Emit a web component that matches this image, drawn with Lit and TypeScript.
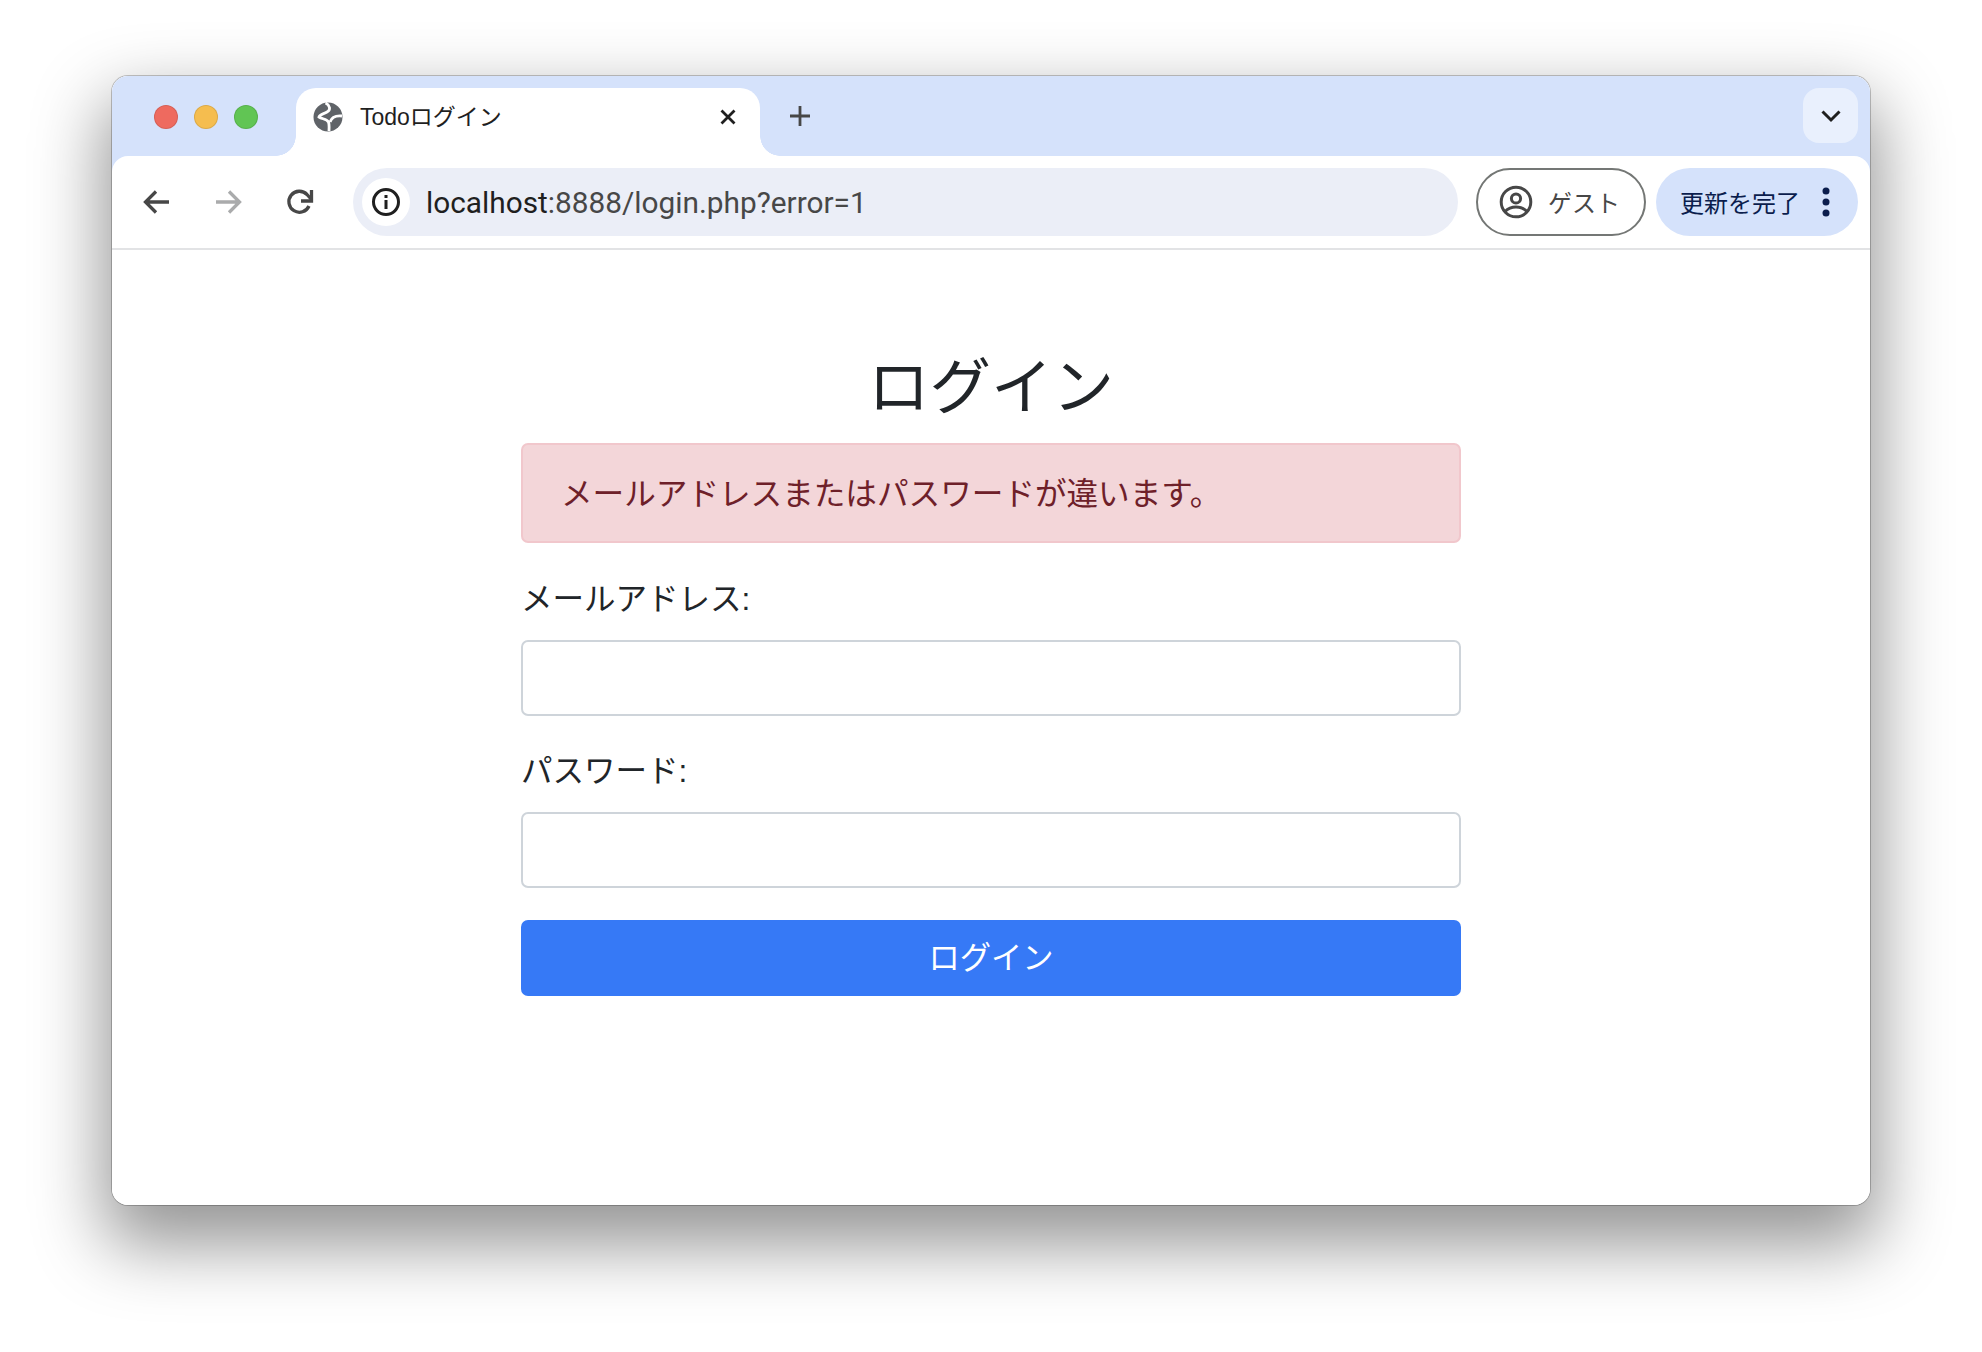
import { LitElement, html, css } from "lit";
import { customElement } from "lit/decorators.js";

@customElement("app-root")
export class AppRoot extends LitElement {
  static styles = css`
    :host {
      display: block;
      width: 1982px;
      height: 1352px;
      box-sizing: border-box;
      padding: 76px 112px 147px 112px;
      background: #ffffff;
      font-family: "Liberation Sans", "Noto Sans CJK JP", sans-serif;
      overflow: hidden;
    }
    .window {
      height: 100%;
      border-radius: 16px;
      background: #fff;
      display: flex;
      flex-direction: column;
      overflow: hidden;
    }
    .frame {
      height: 100%;
      border-radius: 16px;
      box-shadow: 0 0 0 1px rgba(0, 0, 0, 0.22), 0 32px 70px 8px rgba(0, 0, 0, 0.42);
    }
    .strip {
      height: 80px;
      flex: none;
      box-sizing: border-box;
      background: #d5e2fb;
      padding: 12px 12px 0 0;
      display: flex;
      align-items: flex-start;
    }
    .lights {
      display: flex;
      gap: 16px;
      padding: 17px 0 0 42px;
      width: 184px;
      box-sizing: border-box;
    }
    .light { width: 24px; height: 24px; border-radius: 50%; box-sizing: border-box; border: 1px solid rgba(0,0,0,0.1); }
    .red { background: #ee6a5f; }
    .yellow { background: #f5bd4f; }
    .green { background: #61c554; }
    .tab {
      position: relative;
      width: 464px;
      height: 68px;
      background: #fff;
      border-radius: 20px 20px 0 0;
      display: flex;
      align-items: center;
      box-sizing: border-box;
      padding: 0 23px 10px 17px;
      margin-right: 12px;
    }
    .tab::before, .tab::after {
      content: "";
      position: absolute;
      bottom: 0;
      width: 20px;
      height: 20px;
    }
    .tab::before { left: -20px; background: radial-gradient(circle at 0 0, transparent 19.5px, #fff 20px); }
    .tab::after { right: -20px; background: radial-gradient(circle at 100% 0, transparent 19.5px, #fff 20px); }
    .tab-title {
      flex: 1;
      margin: -4px 0 0 17px;
      font-size: 23px;
      color: #1f1f1f;
      white-space: nowrap;
    }
    .plus { margin: 17px 0 0 17px; display: flex; }
    .spacer { flex: 1; }
    .chev {
      width: 55px;
      height: 55px;
      border-radius: 16px;
      background: #e9f0fd;
      display: flex;
      align-items: center;
      justify-content: center;
    }
    .strip-bottom { background: #d5e2fb; flex: none; }
    .toolbar {
      height: 94px;
      box-sizing: border-box;
      background: #fff;
      border-bottom: 2px solid #e2e3e5;
      border-radius: 16px 16px 0 0;
      display: flex;
      align-items: flex-start;
      padding: 12px 12px 0 31px;
    }
    .nav { display: flex; gap: 43px; align-items: center; height: 68px; width: 210px; flex: none; }
    .url {
      flex: none;
      width: 1105px;
      height: 68px;
      border-radius: 34px;
      background: #ebeef7;
      display: flex;
      align-items: center;
      box-sizing: border-box;
      padding-left: 9px;
      margin-right: 18px;
    }
    .info {
      width: 48px;
      height: 48px;
      border-radius: 24px;
      background: #fff;
      display: flex;
      align-items: center;
      justify-content: center;
      flex: none;
    }
    .url-text {
      margin-left: 16px;
      font-family: "Roboto", sans-serif;
      font-size: 29.8px;
      color: #474747;
      white-space: nowrap;
    }
    .url-host { color: #1f1f1f; }
    .guest {
      width: 170px;
      height: 68px;
      box-sizing: border-box;
      border: 2px solid #747775;
      border-radius: 34px;
      display: flex;
      align-items: center;
      padding-left: 21px;
      gap: 15px;
      font-size: 24px;
      color: #474747;
      margin-right: 10px;
      flex: none;
    }
    .guest span, .update span { margin-top: -2px; }
    .update {
      width: 202px;
      height: 68px;
      box-sizing: border-box;
      border-radius: 34px;
      background: #d5e2fb;
      display: flex;
      align-items: center;
      padding-left: 24px;
      font-size: 24px;
      color: #0b1d4d;
      flex: none;
      gap: 22px;
      white-space: nowrap;
    }
    main {
      flex: 1;
      display: flex;
      flex-direction: column;
      align-items: center;
      padding-top: 102px;
      color: #212529;
    }
    .form { width: 940px; display: flex; flex-direction: column; }
    h1 {
      margin: 0 0 19px;
      font-size: 61.5px;
      font-weight: 400;
      line-height: 72px;
      text-align: center;
    }
    .alert {
      box-sizing: border-box;
      height: 100px;
      border: 2px solid #f1c7cc;
      border-radius: 7px;
      background: #f3d6d9;
      color: #6e2029;
      font-size: 31.6px;
      display: flex;
      align-items: center;
      padding: 0 38px 5px;
      margin-bottom: 34px;
      white-space: nowrap;
    }
    label { font-size: 31.5px; line-height: 45px; margin-bottom: 18px; display: block; }
    input {
      display: block;
      width: 100%;
      box-sizing: border-box;
      height: 76px;
      border: 2px solid #ced4da;
      border-radius: 7px;
      background: #fff;
      margin-bottom: 33px;
      outline: none;
    }
    input.last { margin-bottom: 32px; }
    button {
      height: 76px;
      border: none;
      border-radius: 7px;
      background: #3679f6;
      color: #fff;
      font-size: 31.3px;
      font-family: inherit;
      padding: 0 0 5px;
    }
  `;

  render() {
    return html`
      <div class="frame">
        <div class="window">
          <div class="strip">
            <div class="lights">
              <span class="light red"></span><span class="light yellow"></span><span class="light green"></span>
            </div>
            <div class="tab">
              <svg width="30" height="30" viewBox="0 0 30 30">
                <circle cx="15" cy="15" r="14.500" fill="#5f6368"/>
                <path d="M12.500 1C17 3 18 8 14 10 11 12 7 12 6 15 9 17 14 17 15.500 20 16.500 23 16 26 16 29" fill="none" stroke="#fff" stroke-width="2.800"/>
                <path d="M29 14C24 13.500 19 14 17 20" fill="none" stroke="#fff" stroke-width="2.800"/>
              </svg>
              <span class="tab-title">Todoログイン</span>
              <svg width="18" height="18" viewBox="0 0 18 18">
                <path d="M2.500 2.500l13 13M15.500 2.500l-13 13" stroke="#1f1f1f" stroke-width="2.800" fill="none"/>
              </svg>
            </div>
            <div class="plus">
              <svg width="22" height="22" viewBox="0 0 22 22">
                <path d="M11 1v20M1 11h20" stroke="#474747" stroke-width="2.800" fill="none"/>
              </svg>
            </div>
            <div class="spacer"></div>
            <div class="chev">
              <svg width="22" height="14" viewBox="0 0 22 14">
                <path d="M2.500 2.500L11 11l8.500-8.500" stroke="#1f1f1f" stroke-width="3" fill="none"/>
              </svg>
            </div>
          </div>
          <div class="strip-bottom">
            <div class="toolbar">
              <div class="nav">
                <svg width="28" height="26" viewBox="0 0 28 26"><path d="M26 13H3M13 2.500L2.500 13 13 23.500" stroke="#474747" stroke-width="3.300" fill="none"/></svg>
                <svg width="28" height="26" viewBox="0 0 28 26"><path d="M2 13h23M15 2.500L25.500 13 15 23.500" stroke="#aaabac" stroke-width="3.300" fill="none"/></svg>
                <svg width="30" height="28" viewBox="0 0 30 28">
                  <path d="M24 18A10.500 10.500 0 1 1 22 6.500L26 11" stroke="#474747" stroke-width="3.300" fill="none"/>
                  <path d="M26.500 2v11H16" stroke="#474747" stroke-width="3.300" fill="none"/>
                </svg>
              </div>
              <div class="url">
                <div class="info">
                  <svg width="30" height="30" viewBox="0 0 30 30">
                    <circle cx="15" cy="15" r="12.500" fill="none" stroke="#1f1f1f" stroke-width="3"/>
                    <rect x="13.500" y="13" width="3" height="9" fill="#1f1f1f"/>
                    <rect x="13.500" y="8" width="3" height="3" fill="#1f1f1f"/>
                  </svg>
                </div>
                <span class="url-text"><span class="url-host">localhost</span>:8888/login.php?error=1</span>
              </div>
              <div class="guest">
                <svg width="34" height="34" viewBox="0 0 34 34">
                  <circle cx="17" cy="17" r="14.800" fill="none" stroke="#474747" stroke-width="3"/>
                  <circle cx="17" cy="13.500" r="4.600" fill="none" stroke="#474747" stroke-width="3"/>
                  <path d="M6 26.500c3-3 7-4.500 11-4.500s8 1.500 11 4.500" fill="none" stroke="#474747" stroke-width="3"/>
                </svg>
                <span>ゲスト</span>
              </div>
              <div class="update">
                <span>更新を完了</span>
                <svg width="8" height="32" viewBox="0 0 8 32">
                  <circle cx="4" cy="5" r="3.500" fill="#0b1d4d"/>
                  <circle cx="4" cy="16" r="3.500" fill="#0b1d4d"/>
                  <circle cx="4" cy="27" r="3.500" fill="#0b1d4d"/>
                </svg>
              </div>
            </div>
          </div>
          <main>
            <div class="form">
              <h1>ログイン</h1>
              <div class="alert">メールアドレスまたはパスワードが違います。</div>
              <label>メールアドレス:</label>
              <input type="email" />
              <label>パスワード:</label>
              <input class="last" type="password" />
              <button>ログイン</button>
            </div>
          </main>
        </div>
      </div>
    `;
  }
}
